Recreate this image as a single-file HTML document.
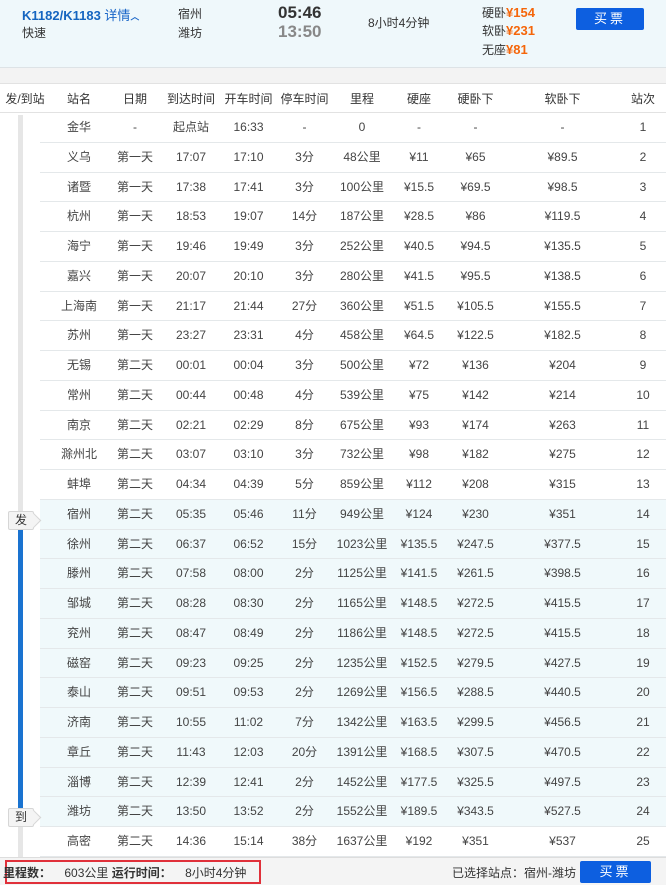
<!DOCTYPE html>
<html><head><meta charset="utf-8"><style>
*{margin:0;padding:0;box-sizing:border-box}
body{width:666px;height:885px;overflow:hidden;background:#fff;font-family:"Liberation Sans","Noto Sans CJK SC",sans-serif;font-size:12px;color:#333;position:relative}
.top{position:absolute;left:0;top:0;width:666px;height:68px;background:#eff8fb;border-bottom:1px solid #dde3e6}
.gap{position:absolute;left:0;top:68px;width:666px;height:16px;background:#f3f3f3;border-bottom:1px solid #e2e2e2}
.abs{position:absolute;white-space:nowrap}
.org{color:#f5660a;font-weight:bold;font-size:13px}
.btn{position:absolute;background:#0d5fe0;color:#fff;text-align:center;border-radius:2px;font-size:13px;letter-spacing:3px}
.hdr{position:absolute;left:0;top:84px;width:666px;height:29px;border-bottom:1px solid #e2e2e2;display:grid;grid-template-columns:50px 58px 54px 58px 57px 55px 60px 54px 59px 115px 46px;line-height:30px;text-align:center;font-size:12px;color:#333}
.rows{position:absolute;left:40px;top:113px;width:626px}
.r{height:29.76px;border-bottom:1px solid #e4e8ea;display:grid;grid-template-columns:10px 58px 54px 58px 57px 55px 60px 54px 59px 115px 46px;line-height:29px;text-align:center;color:#444}
.r.h{background:#f0f9fb}
.line{position:absolute;left:18px;top:115px;width:5px;height:742px;background:#e6e6e6}
.bl{position:absolute;left:18px;top:517px;width:5px;height:300px;background:#1a73d0}
.tag{position:absolute;left:8px;width:26px;height:19px;background:#f4f4f4;border:1px solid #d6d6d6;border-radius:2px;font-size:12px;line-height:17px;text-align:center;color:#333}
.tag:after{content:"";position:absolute;right:-6px;top:3px;width:10px;height:10px;background:#f4f4f4;border-right:1px solid #d6d6d6;border-top:1px solid #d6d6d6;transform:rotate(45deg)}
.foot{position:absolute;left:0;top:857px;width:666px;height:28px;background:#f4f4f4;border-top:1px solid #ddd}
</style></head><body>
<div class="top"></div>
<div class="abs" style="left:22px;top:5px;color:#1565c0;font-weight:bold;font-size:13px">K1182/K1183 <span style="font-weight:normal;color:#1a66c8">详情</span><span style="font-size:9px;color:#1a66c8">︿</span></div>
<div class="abs" style="left:22px;top:24px">快速</div>
<div class="abs" style="left:178px;top:5px">宿州</div>
<div class="abs" style="left:178px;top:24px">潍坊</div>
<div class="abs" style="left:278px;top:3px;font-size:17px;font-weight:bold;color:#333">05:46</div>
<div class="abs" style="left:278px;top:22px;font-size:17px;font-weight:bold;color:#888">13:50</div>
<div class="abs" style="left:368px;top:14px">8小时4分钟</div>
<div class="abs" style="left:482px;top:4px">硬卧<span class="org">¥154</span></div>
<div class="abs" style="left:482px;top:22px">软卧<span class="org">¥231</span></div>
<div class="abs" style="left:482px;top:41px">无座<span class="org">¥81</span></div>
<div class="btn" style="left:576px;top:8px;width:68px;height:22px;line-height:22px">买票</div>
<div class="gap"></div>
<div class="hdr"><span>发/到站</span><span>站名</span><span>日期</span><span>到达时间</span><span>开车时间</span><span>停车时间</span><span>里程</span><span>硬座</span><span>硬卧下</span><span>软卧下</span><span>站次</span></div>
<div class="line"></div><div class="bl"></div>
<div class="rows">
<div class="r"><i></i><span>金华</span><span>-</span><span>起点站</span><span>16:33</span><span>-</span><span>0</span><span>-</span><span>-</span><span>-</span><span>1</span></div>
<div class="r"><i></i><span>义乌</span><span>第一天</span><span>17:07</span><span>17:10</span><span>3分</span><span>48公里</span><span>¥11</span><span>¥65</span><span>¥89.5</span><span>2</span></div>
<div class="r"><i></i><span>诸暨</span><span>第一天</span><span>17:38</span><span>17:41</span><span>3分</span><span>100公里</span><span>¥15.5</span><span>¥69.5</span><span>¥98.5</span><span>3</span></div>
<div class="r"><i></i><span>杭州</span><span>第一天</span><span>18:53</span><span>19:07</span><span>14分</span><span>187公里</span><span>¥28.5</span><span>¥86</span><span>¥119.5</span><span>4</span></div>
<div class="r"><i></i><span>海宁</span><span>第一天</span><span>19:46</span><span>19:49</span><span>3分</span><span>252公里</span><span>¥40.5</span><span>¥94.5</span><span>¥135.5</span><span>5</span></div>
<div class="r"><i></i><span>嘉兴</span><span>第一天</span><span>20:07</span><span>20:10</span><span>3分</span><span>280公里</span><span>¥41.5</span><span>¥95.5</span><span>¥138.5</span><span>6</span></div>
<div class="r"><i></i><span>上海南</span><span>第一天</span><span>21:17</span><span>21:44</span><span>27分</span><span>360公里</span><span>¥51.5</span><span>¥105.5</span><span>¥155.5</span><span>7</span></div>
<div class="r"><i></i><span>苏州</span><span>第一天</span><span>23:27</span><span>23:31</span><span>4分</span><span>458公里</span><span>¥64.5</span><span>¥122.5</span><span>¥182.5</span><span>8</span></div>
<div class="r"><i></i><span>无锡</span><span>第二天</span><span>00:01</span><span>00:04</span><span>3分</span><span>500公里</span><span>¥72</span><span>¥136</span><span>¥204</span><span>9</span></div>
<div class="r"><i></i><span>常州</span><span>第二天</span><span>00:44</span><span>00:48</span><span>4分</span><span>539公里</span><span>¥75</span><span>¥142</span><span>¥214</span><span>10</span></div>
<div class="r"><i></i><span>南京</span><span>第二天</span><span>02:21</span><span>02:29</span><span>8分</span><span>675公里</span><span>¥93</span><span>¥174</span><span>¥263</span><span>11</span></div>
<div class="r"><i></i><span>滁州北</span><span>第二天</span><span>03:07</span><span>03:10</span><span>3分</span><span>732公里</span><span>¥98</span><span>¥182</span><span>¥275</span><span>12</span></div>
<div class="r"><i></i><span>蚌埠</span><span>第二天</span><span>04:34</span><span>04:39</span><span>5分</span><span>859公里</span><span>¥112</span><span>¥208</span><span>¥315</span><span>13</span></div>
<div class="r h"><i></i><span>宿州</span><span>第二天</span><span>05:35</span><span>05:46</span><span>11分</span><span>949公里</span><span>¥124</span><span>¥230</span><span>¥351</span><span>14</span></div>
<div class="r h"><i></i><span>徐州</span><span>第二天</span><span>06:37</span><span>06:52</span><span>15分</span><span>1023公里</span><span>¥135.5</span><span>¥247.5</span><span>¥377.5</span><span>15</span></div>
<div class="r h"><i></i><span>滕州</span><span>第二天</span><span>07:58</span><span>08:00</span><span>2分</span><span>1125公里</span><span>¥141.5</span><span>¥261.5</span><span>¥398.5</span><span>16</span></div>
<div class="r h"><i></i><span>邹城</span><span>第二天</span><span>08:28</span><span>08:30</span><span>2分</span><span>1165公里</span><span>¥148.5</span><span>¥272.5</span><span>¥415.5</span><span>17</span></div>
<div class="r h"><i></i><span>兖州</span><span>第二天</span><span>08:47</span><span>08:49</span><span>2分</span><span>1186公里</span><span>¥148.5</span><span>¥272.5</span><span>¥415.5</span><span>18</span></div>
<div class="r h"><i></i><span>磁窑</span><span>第二天</span><span>09:23</span><span>09:25</span><span>2分</span><span>1235公里</span><span>¥152.5</span><span>¥279.5</span><span>¥427.5</span><span>19</span></div>
<div class="r h"><i></i><span>泰山</span><span>第二天</span><span>09:51</span><span>09:53</span><span>2分</span><span>1269公里</span><span>¥156.5</span><span>¥288.5</span><span>¥440.5</span><span>20</span></div>
<div class="r h"><i></i><span>济南</span><span>第二天</span><span>10:55</span><span>11:02</span><span>7分</span><span>1342公里</span><span>¥163.5</span><span>¥299.5</span><span>¥456.5</span><span>21</span></div>
<div class="r h"><i></i><span>章丘</span><span>第二天</span><span>11:43</span><span>12:03</span><span>20分</span><span>1391公里</span><span>¥168.5</span><span>¥307.5</span><span>¥470.5</span><span>22</span></div>
<div class="r h"><i></i><span>淄博</span><span>第二天</span><span>12:39</span><span>12:41</span><span>2分</span><span>1452公里</span><span>¥177.5</span><span>¥325.5</span><span>¥497.5</span><span>23</span></div>
<div class="r h"><i></i><span>潍坊</span><span>第二天</span><span>13:50</span><span>13:52</span><span>2分</span><span>1552公里</span><span>¥189.5</span><span>¥343.5</span><span>¥527.5</span><span>24</span></div>
<div class="r"><i></i><span>高密</span><span>第二天</span><span>14:36</span><span>15:14</span><span>38分</span><span>1637公里</span><span>¥192</span><span>¥351</span><span>¥537</span><span>25</span></div>
</div>
<div class="tag" style="top:511px">发</div>
<div class="tag" style="top:808px">到</div>
<div class="foot"></div>
<div class="abs" style="left:5px;top:860px;width:256px;height:24px;border:2px solid #e0303a"></div>
<div class="abs" style="left:3px;top:864px"><b>里程数：</b>&nbsp;&nbsp;&nbsp;&nbsp;603公里 <b>运行时间：</b>&nbsp;&nbsp;&nbsp;&nbsp;8小时4分钟</div>
<div class="abs" style="left:452px;top:864px">已选择站点：宿州-潍坊</div>
<div class="btn" style="left:580px;top:861px;width:71px;height:22px;line-height:22px">买票</div>
</body></html>
